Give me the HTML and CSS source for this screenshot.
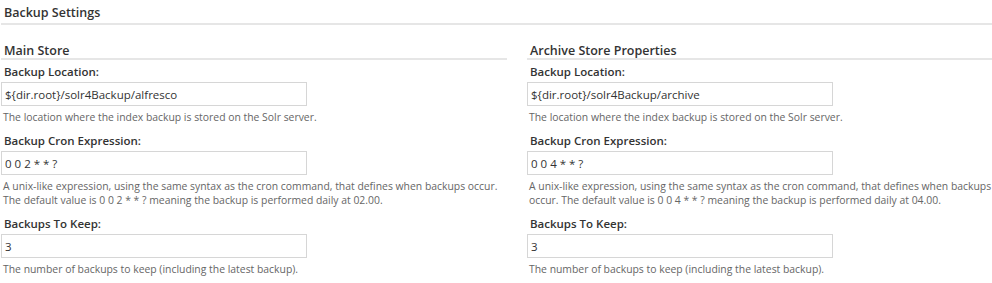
FILE: index.html
```html
<!DOCTYPE html>
<html lang="en">
<head>
    <meta charset="UTF-8">
    <title>Backup Settings</title>
    <link rel="stylesheet" href="styles.css">
</head>
<body>
    <div class="page">
        <h2 class="page-title">Backup Settings</h2>

        <div class="columns">
            <!-- main store -->
            <div class="column">
                <h3 class="section-title">Main Store</h3>

                <div class="field">
                    <label class="field-label">Backup Location:</label>
                    <input class="field-input" type="text" value="${dir.root}/solr4Backup/alfresco">
                    <p class="field-help">The location where the index backup is stored on the Solr server.</p>
                </div>

                <div class="field">
                    <label class="field-label">Backup Cron Expression:</label>
                    <input class="field-input" type="text" value="0 0 2 * * ?">
                    <p class="field-help">A unix-like expression, using the same syntax as the cron command, that defines when backups occur. The default value is 0 0 2 * * ? meaning the backup is performed daily at 02.00.</p>
                </div>

                <div class="field">
                    <label class="field-label">Backups To Keep:</label>
                    <input class="field-input" type="text" value="3">
                    <p class="field-help">The number of backups to keep (including the latest backup).</p>
                </div>
            </div>

            <!-- archive store -->
            <div class="column">
                <h3 class="section-title">Archive Store Properties</h3>

                <div class="field">
                    <label class="field-label">Backup Location:</label>
                    <input class="field-input" type="text" value="${dir.root}/solr4Backup/archive">
                    <p class="field-help">The location where the index backup is stored on the Solr server.</p>
                </div>

                <div class="field">
                    <label class="field-label">Backup Cron Expression:</label>
                    <input class="field-input" type="text" value="0 0 4 * * ?">
                    <p class="field-help">A unix-like expression, using the same syntax as the cron command, that defines when backups occur. The default value is 0 0 4 * * ? meaning the backup is performed daily at 04.00.</p>
                </div>

                <div class="field">
                    <label class="field-label">Backups To Keep:</label>
                    <input class="field-input" type="text" value="3">
                    <p class="field-help">The number of backups to keep (including the latest backup).</p>
                </div>
            </div>
        </div>
    </div>
</body>
</html>
```

FILE: styles.css
```css
* {
    margin: 0;
    padding: 0;
    box-sizing: border-box;
    font-family: "Open Sans", "Liberation Sans", sans-serif;
}

body {
    background-color: #fff;
    color: #333;
}

.page {
    padding: 4px 0 0 1px;
}

.page-title {
    font-size: 12.5px;
    font-weight: 600;
    line-height: 17px;
    color: #333;
    padding: 0 0 2px 3px;
    border-bottom: 2px solid #e6e6e6;
    margin-bottom: 18px;
}

.columns {
    display: grid;
    grid-template-columns: 506px 1fr;
    column-gap: 20px;
}

.section-title {
    font-size: 12.5px;
    font-weight: 600;
    line-height: 15px;
    color: #333;
    padding: 0 0 0 3px;
    border-bottom: 2px solid #e6e6e6;
    margin-bottom: 4px;
}

.field {
    margin-bottom: 9px;
}

.field-label {
    display: block;
    font-size: 11.5px;
    font-weight: 600;
    line-height: 16px;
    color: #333;
    padding-left: 3px;
    margin-bottom: 2px;
}

.field-input {
    display: block;
    width: 306px;
    height: 24px;
    padding: 0 3px;
    border: 1px solid #d6d6d6;
    font-size: 11.5px;
    color: #333;
    background-color: #fff;
}

.field-help {
    margin-top: 4px;
    padding-left: 2px;
    font-size: 10.4px;
    line-height: 14px;
    color: #666;
}
```
